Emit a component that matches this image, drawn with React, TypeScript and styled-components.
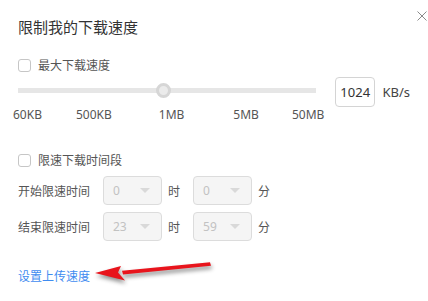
import React from "react";
import styled, { createGlobalStyle } from "styled-components";

const GlobalStyle = createGlobalStyle`
  html, body {
    margin: 0;
    padding: 0;
    background: #fff;
  }
  body {
    font-family: "Noto Sans", "Noto Sans CJK SC", sans-serif;
    color: #444;
  }
`;

type labelProps = { ml: number };

const ticks = [
  { text: "60KB", ml: 0 },
  { text: "500KB", ml: 34 },
  { text: "1MB", ml: 47 },
  { text: "5MB", ml: 49 },
  { text: "50MB", ml: 33 },
];

const Checkbox: React.FC<{ label: string }> = ({ label }) => (
  <CheckRow>
    <Box />
    <CheckLabel>{label}</CheckLabel>
  </CheckRow>
);

const Select: React.FC<{ value: string }> = ({ value }) => (
  <SelectBox>
    <span>{value}</span>
    <Caret />
  </SelectBox>
);

const TimeLine: React.FC<{ label: string; h: string; m: string }> = ({
  label,
  h,
  m,
}) => (
  <TimeRow>
    <RowLabel>{label}</RowLabel>
    <Select value={h} />
    <Unit>时</Unit>
    <Select value={m} />
    <Unit>分</Unit>
  </TimeRow>
);

const App: React.FC = () => {
  return (
    <Dialog>
      <GlobalStyle />
      <Close>
        <svg width="10" height="10" viewBox="0 0 10 10">
          <path d="M0.5 0.5 L9.5 9.5 M9.5 0.5 L0.5 9.5" stroke="#8a8a8a" strokeWidth="1" />
        </svg>
      </Close>
      <Title>限制我的下载速度</Title>
      <Checkbox label="最大下载速度" />
      <SliderRow>
        <SliderCol>
          <Track>
            <Knob />
          </Track>
          <Ticks>
            {ticks.map((t) => (
              <Tick key={t.text} ml={t.ml}>
                {t.text}
              </Tick>
            ))}
          </Ticks>
        </SliderCol>
        <SpeedInput>1024</SpeedInput>
        <SpeedUnit>KB/s</SpeedUnit>
      </SliderRow>
      <Section>
        <Checkbox label="限速下载时间段" />
      </Section>
      <TimeLine label="开始限速时间" h="0" m="0" />
      <TimeLine label="结束限速时间" h="23" m="59" />
      <LinkRow>
        <UploadLink href="#upload">设置上传速度</UploadLink>
        <Arrow width="130" height="36" viewBox="0 0 130 36">
          <polygon points="120,7.3 121,10.7 33,19.6 32,15.8" fill="#e8141c" />
          <polygon points="5,18 31,11 28,17.6 35,25.5" fill="#e8141c" />
        </Arrow>
      </LinkRow>
    </Dialog>
  );
};
export default App;

const Dialog = styled.div`
  position: relative;
  width: 428px;
  height: 301px;
  padding: 0 18px;
  box-sizing: border-box;
  overflow: hidden;
`;

const Close = styled.div`
  position: absolute;
  top: 4px;
  right: 1px;
  width: 10px;
  height: 10px;
`;

const Title = styled.div`
  padding-top: 17px;
  font-size: 15px;
  line-height: 20px;
  color: #333;
`;

const CheckRow = styled.div`
  display: flex;
  align-items: center;
  margin-top: 18px;
  height: 20px;
`;

const Box = styled.div`
  width: 13px;
  height: 13px;
  border: 1px solid #c6c6c6;
  border-radius: 3px;
  box-sizing: border-box;
  background: #fff;
`;

const CheckLabel = styled.span`
  margin-left: 7px;
  font-size: 12px;
  color: #555;
`;

const SliderRow = styled.div`
  display: flex;
  align-items: flex-start;
  margin-top: 2px;
  margin-left: -5px;
`;

const SliderCol = styled.div`
  width: 308px;
`;

const Track = styled.div`
  position: relative;
  margin: 11px 5px 0;
  height: 5px;
  background: #e6e6e6;
`;

const Knob = styled.div`
  position: absolute;
  left: 138px;
  top: -5px;
  width: 15px;
  height: 15px;
  border-radius: 50%;
  background: #ebebeb;
  border: 3px solid #d6d6d6;
  box-sizing: border-box;
`;

const Ticks = styled.div`
  display: flex;
  margin-top: 14px;
  line-height: 16px;
`;

const Tick = styled.span<labelProps>`
  margin-left: ${(p) => p.ml}px;
  font-size: 12px;
  color: #555;
  white-space: nowrap;
`;

const SpeedInput = styled.div`
  margin-left: 14px;
  width: 41px;
  height: 30px;
  border: 1px solid #d4d4d4;
  border-radius: 4px;
  box-sizing: border-box;
  display: flex;
  align-items: center;
  justify-content: center;
  font-size: 13px;
  color: #333;
`;

const SpeedUnit = styled.span`
  margin-left: 7px;
  line-height: 30px;
  font-size: 13px;
  color: #444;
`;

const Section = styled.div`
  margin-top: 27px;
`;

const TimeRow = styled.div`
  display: flex;
  align-items: center;
  margin-top: 6px;
  & + & {
    margin-top: 7px;
  }
`;

const RowLabel = styled.span`
  width: 85px;
  font-size: 12px;
  color: #555;
`;

const SelectBox = styled.div`
  width: 59px;
  height: 29px;
  border: 1px solid #dcdcdc;
  border-radius: 4px;
  background: #f5f5f5;
  box-sizing: border-box;
  display: flex;
  align-items: center;
  justify-content: space-between;
  padding: 0 11px 0 9px;
  font-size: 12px;
  color: #c2c2c2;
`;

const Caret = styled.span`
  width: 0;
  height: 0;
  border-left: 5px solid transparent;
  border-right: 5px solid transparent;
  border-top: 5px solid #d9d9d9;
`;

const Unit = styled.span`
  margin: 0 13px 0 6px;
  font-size: 12px;
  color: #555;
`;

const LinkRow = styled.div`
  position: relative;
  margin-top: 26px;
  line-height: 16px;
`;

const UploadLink = styled.a`
  font-size: 12px;
  color: #3f8cf0;
  text-decoration: none;
`;

const Arrow = styled.svg`
  position: absolute;
  left: 72px;
  top: -12px;
  filter: drop-shadow(1px 3px 2px rgba(0, 0, 0, 0.45));
`;
